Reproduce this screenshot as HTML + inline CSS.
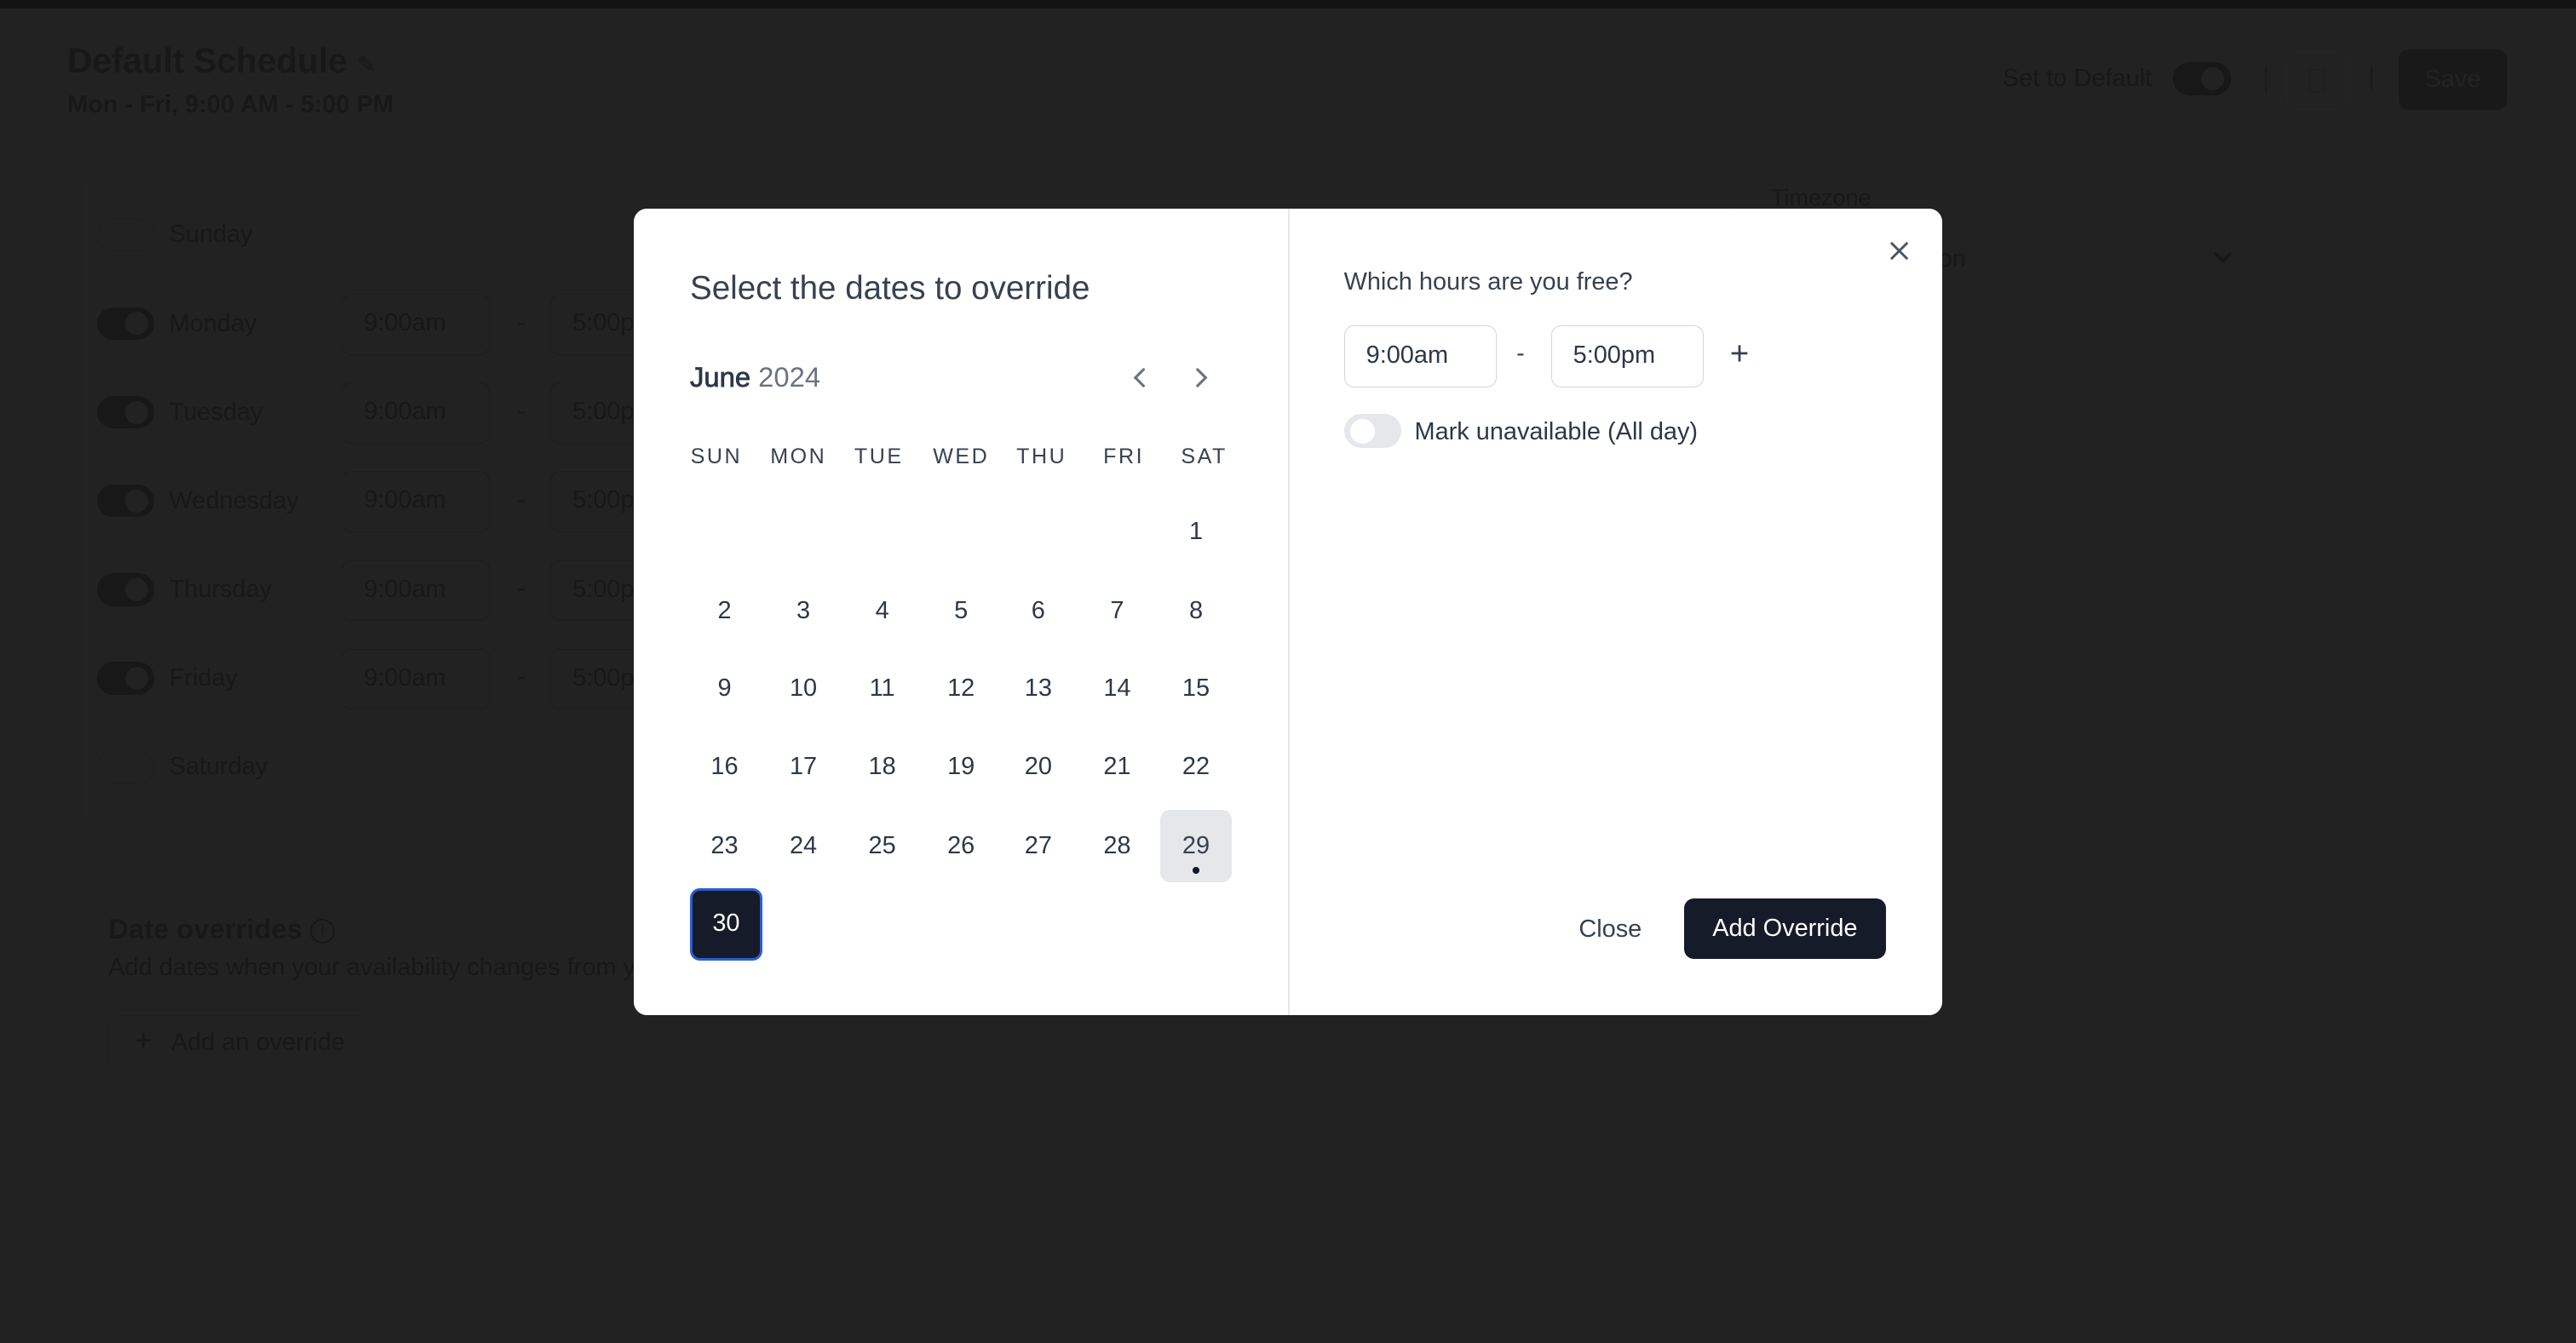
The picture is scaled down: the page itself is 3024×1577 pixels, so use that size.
<!DOCTYPE html>
<html><head><meta charset="utf-8">
<style>
*{margin:0;padding:0;box-sizing:border-box}
html,body{width:3024px;height:1577px;overflow:hidden;background:#222222}
#w{position:relative;width:1568px;height:818px;zoom:1.92857;font-family:"Liberation Sans",Arial,sans-serif;background:#222222;overflow:hidden}
.a{position:absolute;white-space:nowrap}
.bg{color:#171817}
.tog{position:absolute;width:35px;height:20px;border-radius:10px;background:#171817}
.tog::after{content:"";position:absolute;right:4px;top:3px;width:14px;height:14px;border-radius:50%;background:#222}
.inp{position:absolute;border:1px solid #1c1d1c;border-radius:6px;height:37px;width:90px;font-size:15px;line-height:35px;padding-left:13px;color:#171817}
#m{position:absolute;left:386px;top:127px;width:796px;height:491px;background:#fff;border-radius:8px;overflow:hidden}
.d{position:absolute;width:44px;height:44px;line-height:44px;text-align:center;font-size:15px;color:#2d3748;border-radius:6px}
.h{position:absolute;width:60px;text-align:center;font-size:13px;letter-spacing:1.3px;color:#374151;line-height:16px}
</style></head><body><div id="w">
<div class="a" style="left:0;top:0;width:1568px;height:5px;background:#131313"></div>

<div class="a bg" style="left:41px;top:24px;font-size:21px;font-weight:bold;line-height:26px">Default Schedule <span style="font-size:14px;font-weight:normal">✎</span></div>
<div class="a bg" style="left:41px;top:55px;font-size:15px;font-weight:bold;line-height:18px">Mon - Fri, 9:00 AM - 5:00 PM</div>

<div class="a bg" style="left:1219px;top:39px;font-size:15px;line-height:18px">Set to Default</div>
<div class="tog" style="left:1323px;top:38px"></div>
<div class="a" style="left:1379px;top:40px;width:1px;height:16px;background:#1b1c1b"></div>
<div class="a" style="left:1392px;top:31px;width:36px;height:36px;border:1px solid #252525;border-radius:6px"></div>
<div class="a" style="left:1405px;top:42px;width:10px;height:14px;border:1px solid #1c1d1c;border-radius:1px"></div>
<div class="a" style="left:1443px;top:40px;width:1px;height:16px;background:#1b1c1b"></div>
<div class="a" style="left:1460px;top:30px;width:66px;height:37px;background:#181918;border-radius:6px;color:#222;font-size:15px;line-height:37px;text-align:center">Save</div>

<div class="a" style="left:53px;top:105px;width:1000px;height:400px;border:1px solid #242424;border-radius:8px"></div>

<div class="a" style="left:59px;top:133px;width:35px;height:20px;border-radius:10px;border:1px solid #1f1f1f"></div>
<div class="a bg" style="left:103px;top:134px;font-size:15px;line-height:18px">Sunday</div>
<div class="tog" style="left:59px;top:187px"></div>
<div class="a bg" style="left:103px;top:188px;font-size:15px;line-height:18px">Monday</div>
<div class="inp" style="left:208px;top:179px">9:00am</div><div class="a bg" style="left:315px;top:188px;font-size:15px">-</div><div class="inp" style="left:335px;top:179px">5:00pm</div>
<div class="tog" style="left:59px;top:241px"></div>
<div class="a bg" style="left:103px;top:242px;font-size:15px;line-height:18px">Tuesday</div>
<div class="inp" style="left:208px;top:233px">9:00am</div><div class="a bg" style="left:315px;top:242px;font-size:15px">-</div><div class="inp" style="left:335px;top:233px">5:00pm</div>
<div class="tog" style="left:59px;top:295px"></div>
<div class="a bg" style="left:103px;top:296px;font-size:15px;line-height:18px">Wednesday</div>
<div class="inp" style="left:208px;top:287px">9:00am</div><div class="a bg" style="left:315px;top:296px;font-size:15px">-</div><div class="inp" style="left:335px;top:287px">5:00pm</div>
<div class="tog" style="left:59px;top:349px"></div>
<div class="a bg" style="left:103px;top:350px;font-size:15px;line-height:18px">Thursday</div>
<div class="inp" style="left:208px;top:341px">9:00am</div><div class="a bg" style="left:315px;top:350px;font-size:15px">-</div><div class="inp" style="left:335px;top:341px">5:00pm</div>
<div class="tog" style="left:59px;top:403px"></div>
<div class="a bg" style="left:103px;top:404px;font-size:15px;line-height:18px">Friday</div>
<div class="inp" style="left:208px;top:395px">9:00am</div><div class="a bg" style="left:315px;top:404px;font-size:15px">-</div><div class="inp" style="left:335px;top:395px">5:00pm</div>
<div class="a" style="left:59px;top:457px;width:35px;height:20px;border-radius:10px;border:1px solid #1f1f1f"></div>
<div class="a bg" style="left:103px;top:458px;font-size:15px;line-height:18px">Saturday</div>

<div class="a bg" style="left:1078px;top:112px;font-size:14px;line-height:17px">Timezone</div>
<div class="a" style="left:1150px;top:140px;width:230px;height:37px;border:1px solid #1f1f1f;border-radius:6px"></div>
<div class="a bg" style="left:1180px;top:149px;font-size:15px;line-height:18px">on</div>
<svg class="a" style="left:1346px;top:152px" width="14" height="10" viewBox="0 0 14 10"><path d="M2 2 L7 7 L12 2" fill="none" stroke="#171817" stroke-width="2"/></svg>

<div class="a bg" style="left:66px;top:556px;font-size:17px;font-weight:bold;line-height:20px">Date overrides <span style="display:inline-block;width:15px;height:15px;border:1.5px solid #171817;border-radius:50%;font-size:10px;line-height:12px;text-align:center;vertical-align:middle;font-weight:normal">i</span></div>
<div class="a bg" style="left:66px;top:580px;font-size:15px;line-height:18px">Add dates when your availability changes from your daily hours.</div>
<div class="a" style="left:66px;top:618px;width:160px;height:33px;border:1px solid #1f1f1f;border-radius:6px"></div>
<div class="a bg" style="left:82px;top:624px;font-size:15px;line-height:20px"><span style="font-size:18px">+</span>&nbsp;&nbsp; Add an override</div>

<div id="m">
  <div class="a" style="left:398px;top:0;width:1px;height:491px;background:#e5e7eb"></div>
  <div class="a" style="left:34px;top:37px;font-size:20px;line-height:24px;color:#374151">Select the dates to override</div>
  <div class="a" style="left:34px;top:93px;font-size:17px;line-height:20px;color:#374151"><span style="color:#2d3748;-webkit-text-stroke:0.4px #2d3748">June</span> <span style="color:#6b7280">2024</span></div>
  <svg class="a" style="left:302px;top:96px" width="12" height="14" viewBox="0 0 12 14"><path d="M8 2 L3 7 L8 12" fill="none" stroke="#6b7280" stroke-width="1.6" stroke-linecap="round"/></svg>
  <svg class="a" style="left:339px;top:96px" width="12" height="14" viewBox="0 0 12 14"><path d="M4 2 L9 7 L4 12" fill="none" stroke="#6b7280" stroke-width="1.6" stroke-linecap="round"/></svg>

  <div class="h" style="left:20px;top:143px">SUN</div>
  <div class="h" style="left:70px;top:143px">MON</div>
  <div class="h" style="left:119px;top:143px">TUE</div>
  <div class="h" style="left:169px;top:143px">WED</div>
  <div class="h" style="left:218px;top:143px">THU</div>
  <div class="h" style="left:268px;top:143px">FRI</div>
  <div class="h" style="left:317px;top:143px">SAT</div>

  <div class="d" style="left:320px;top:175px">1</div>
  <div class="d" style="left:33px;top:223px">2</div><div class="d" style="left:81px;top:223px">3</div><div class="d" style="left:129px;top:223px">4</div><div class="d" style="left:177px;top:223px">5</div><div class="d" style="left:224px;top:223px">6</div><div class="d" style="left:272px;top:223px">7</div><div class="d" style="left:320px;top:223px">8</div>
  <div class="d" style="left:33px;top:270px">9</div><div class="d" style="left:81px;top:270px">10</div><div class="d" style="left:129px;top:270px">11</div><div class="d" style="left:177px;top:270px">12</div><div class="d" style="left:224px;top:270px">13</div><div class="d" style="left:272px;top:270px">14</div><div class="d" style="left:320px;top:270px">15</div>
  <div class="d" style="left:33px;top:318px">16</div><div class="d" style="left:81px;top:318px">17</div><div class="d" style="left:129px;top:318px">18</div><div class="d" style="left:177px;top:318px">19</div><div class="d" style="left:224px;top:318px">20</div><div class="d" style="left:272px;top:318px">21</div><div class="d" style="left:320px;top:318px">22</div>
  <div class="d" style="left:33px;top:366px">23</div><div class="d" style="left:81px;top:366px">24</div><div class="d" style="left:129px;top:366px">25</div><div class="d" style="left:177px;top:366px">26</div><div class="d" style="left:224px;top:366px">27</div><div class="d" style="left:272px;top:366px">28</div>
  <div class="d" style="left:320px;top:366px;background:#e5e7eb;color:#374151">29<span style="position:absolute;left:20px;top:35px;width:4px;height:4px;border-radius:50%;background:#111827"></span></div>
  <div class="d" style="left:34px;top:414px;background:#151b28;color:#fff;border:2px solid #2b5fd0;line-height:40px">30</div>

  <svg class="a" style="left:764px;top:20px" width="12" height="12" viewBox="0 0 12 12"><path d="M1 1 L11 11 M11 1 L1 11" stroke="#4b5563" stroke-width="1.5"/></svg>
  <div class="a" style="left:432px;top:36px;font-size:15px;line-height:18px;color:#374151">Which hours are you free?</div>
  <div class="a" style="left:432px;top:71px;width:93px;height:38px;border:1px solid #d1d5db;border-radius:6px;font-size:15px;line-height:36px;padding-left:13px;color:#2d3748">9:00am</div>
  <div class="a" style="left:537px;top:80px;font-size:15px;color:#374151">-</div>
  <div class="a" style="left:558px;top:71px;width:93px;height:38px;border:1px solid #d1d5db;border-radius:6px;font-size:15px;line-height:36px;padding-left:13px;color:#2d3748">5:00pm</div>
  <div class="a" style="left:667px;top:78px;font-size:20px;line-height:22px;color:#374151">+</div>
  <div class="a" style="left:432px;top:125px;width:35px;height:21px;border-radius:11px;background:#e5e7eb"><span style="position:absolute;left:4px;top:3px;width:15px;height:15px;border-radius:50%;background:#fff"></span></div>
  <div class="a" style="left:475px;top:127px;font-size:15px;line-height:18px;color:#2d3748">Mark unavailable (All day)</div>

  <div class="a" style="left:575px;top:430px;font-size:15px;line-height:18px;color:#374151">Close</div>
  <div class="a" style="left:639px;top:420px;width:123px;height:37px;background:#151b28;border-radius:6px;color:#fff;font-size:15px;line-height:37px;text-align:center">Add Override</div>
</div>
</div></body></html>
